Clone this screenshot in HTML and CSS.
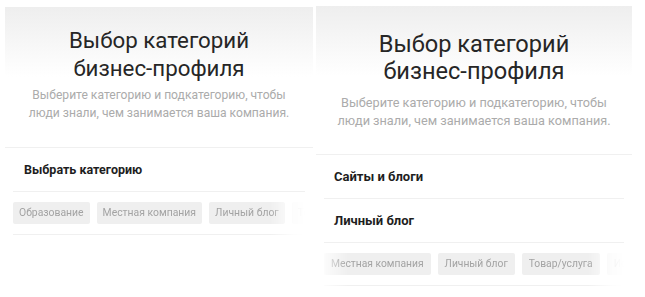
FILE: index.html
```html
<!DOCTYPE html>
<html>
<head>
    <title>Выбор категорий бизнес-профиля</title>
    <meta charset="utf-8">
    <meta name="viewport" content="width=device-width, initial-scale=1">
    <link rel="stylesheet" href="styles.css">
</head>
<body>
    <div class="shots">
        <!-- Шаг 1: выбор категории -->
        <div class="panel left">
            <div class="head">
                <h1>Выбор категорий<br>бизнес-профиля</h1>
                <p>Выберите категорию и подкатегорию, чтобы<br>люди знали, чем занимается ваша компания.</p>
            </div>
            <div class="row">Выбрать категорию</div>
            <div class="chips fade-right">
                <span class="chip">Образование</span>
                <span class="chip">Местная компания</span>
                <span class="chip">Личный блог</span>
                <span class="chip">Товар/услуга</span>
            </div>
        </div>

        <!-- Шаг 2: выбранная категория -->
        <div class="panel right">
            <div class="head">
                <h1>Выбор категорий<br>бизнес-профиля</h1>
                <p>Выберите категорию и подкатегорию, чтобы<br>люди знали, чем занимается ваша компания.</p>
            </div>
            <div class="row">Сайты и блоги</div>
            <div class="row">Личный блог</div>
            <div class="chips fade-both">
                <span class="chip">Местная компания</span>
                <span class="chip">Личный блог</span>
                <span class="chip">Товар/услуга</span>
                <span class="chip">Искусство</span>
            </div>
        </div>
    </div>
</body>
</html>
```

FILE: styles.css
```css
body {
    margin: 0;
    background-color: #ffffff;
    font-family: Roboto, "Noto Sans", Arial, sans-serif;
}

.shots {
    display: flex;
    gap: 3px;
    padding: 6px 0 0 5px;
}

.panel {
    background: linear-gradient(#eeeeee, #ffffff 70px);
    overflow: hidden;
}

.panel.left {
    width: 308px;
    margin-top: 1px;
}

.panel.right {
    width: 316px;
}

.head {
    text-align: center;
    border-bottom: 1px solid #f0f0f0;
}

h1 {
    margin: 0;
    font-weight: 400;
    color: #262626;
}

.head p {
    margin: 0;
    color: #ababab;
}

.left .head {
    padding: 19px 0 25px;
}

.left h1 {
    font-size: 22.3px;
    line-height: 28px;
}

.left .head p {
    font-size: 12.1px;
    line-height: 18px;
    margin-top: 4px;
}

.right .head {
    padding: 25px 0 24px;
}

.right h1 {
    font-size: 23.6px;
    line-height: 27px;
}

.right .head p {
    font-size: 12.7px;
    line-height: 18px;
    margin-top: 9px;
}

.row {
    margin: 0 8px;
    padding-left: 11px;
    height: 43px;
    display: flex;
    align-items: center;
    font-size: 12.5px;
    font-weight: 700;
    color: #1e1e1e;
    border-bottom: 1px solid #f0f0f0;
}

.right .row {
    padding-left: 10px;
    height: 43px;
    font-size: 13px;
}

.chips {
    display: flex;
    gap: 7px;
    margin: 0 8px;
    padding: 10px 0;
    border-bottom: 1px solid #f0f0f0;
    white-space: nowrap;
    overflow: hidden;
}

.chip {
    flex: none;
    background-color: #efefef;
    color: #a3a3a3;
    font-size: 10.4px;
    line-height: 22px;
    padding: 0 6px;
    border-radius: 2px;
}

.right .chip {
    font-size: 10.3px;
    padding: 0 7px;
}

.fade-right {
    -webkit-mask-image: linear-gradient(90deg, #000 88%, rgba(0,0,0,0.15) 96%, transparent 100%);
    mask-image: linear-gradient(90deg, #000 88%, rgba(0,0,0,0.15) 96%, transparent 100%);
}

.fade-both {
    -webkit-mask-image: linear-gradient(90deg, rgba(0,0,0,0.2) 0, #000 8%, #000 88%, rgba(0,0,0,0.15) 96%, transparent 100%);
    mask-image: linear-gradient(90deg, rgba(0,0,0,0.2) 0, #000 8%, #000 88%, rgba(0,0,0,0.15) 96%, transparent 100%);
}
```
